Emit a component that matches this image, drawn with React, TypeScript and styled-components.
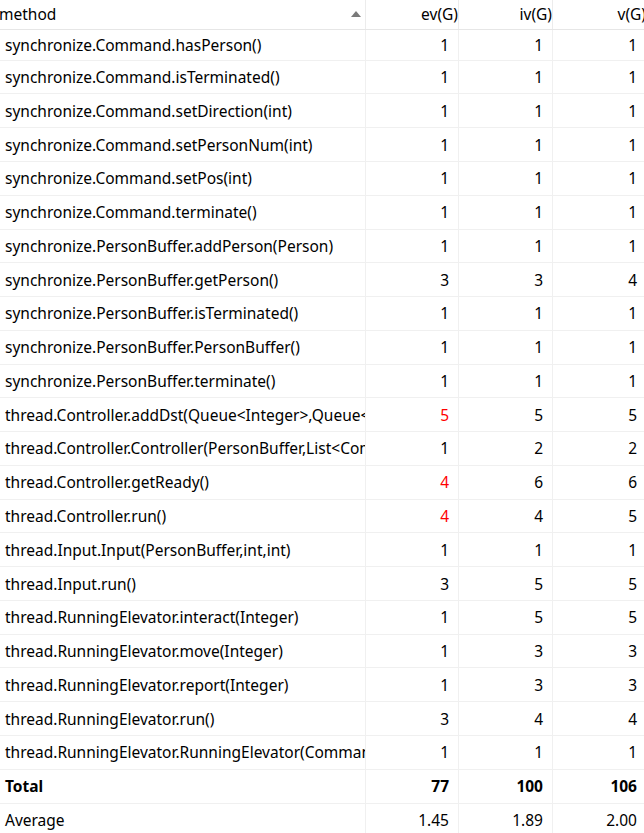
import styled, { createGlobalStyle } from 'styled-components'

interface MethodRow {
  name: string
  ev: number
  iv: number
  v: number
}

const rows: MethodRow[] = [
  { name: 'synchronize.Command.hasPerson()', ev: 1, iv: 1, v: 1 },
  { name: 'synchronize.Command.isTerminated()', ev: 1, iv: 1, v: 1 },
  { name: 'synchronize.Command.setDirection(int)', ev: 1, iv: 1, v: 1 },
  { name: 'synchronize.Command.setPersonNum(int)', ev: 1, iv: 1, v: 1 },
  { name: 'synchronize.Command.setPos(int)', ev: 1, iv: 1, v: 1 },
  { name: 'synchronize.Command.terminate()', ev: 1, iv: 1, v: 1 },
  { name: 'synchronize.PersonBuffer.addPerson(Person)', ev: 1, iv: 1, v: 1 },
  { name: 'synchronize.PersonBuffer.getPerson()', ev: 3, iv: 3, v: 4 },
  { name: 'synchronize.PersonBuffer.isTerminated()', ev: 1, iv: 1, v: 1 },
  { name: 'synchronize.PersonBuffer.PersonBuffer()', ev: 1, iv: 1, v: 1 },
  { name: 'synchronize.PersonBuffer.terminate()', ev: 1, iv: 1, v: 1 },
  { name: 'thread.Controller.addDst(Queue<Integer>,Queue<Integer>)', ev: 5, iv: 5, v: 5 },
  { name: 'thread.Controller.Controller(PersonBuffer,List<Command>)', ev: 1, iv: 2, v: 2 },
  { name: 'thread.Controller.getReady()', ev: 4, iv: 6, v: 6 },
  { name: 'thread.Controller.run()', ev: 4, iv: 4, v: 5 },
  { name: 'thread.Input.Input(PersonBuffer,int,int)', ev: 1, iv: 1, v: 1 },
  { name: 'thread.Input.run()', ev: 3, iv: 5, v: 5 },
  { name: 'thread.RunningElevator.interact(Integer)', ev: 1, iv: 5, v: 5 },
  { name: 'thread.RunningElevator.move(Integer)', ev: 1, iv: 3, v: 3 },
  { name: 'thread.RunningElevator.report(Integer)', ev: 1, iv: 3, v: 3 },
  { name: 'thread.RunningElevator.run()', ev: 3, iv: 4, v: 4 },
  { name: 'thread.RunningElevator.RunningElevator(Command)', ev: 1, iv: 1, v: 1 },
]

const GlobalStyle = createGlobalStyle`
  html, body {
    margin: 0;
    padding: 0;
    background: #ffffff;
    overflow: hidden;
  }
  body {
    font-family: 'Noto Sans', 'Open Sans', sans-serif;
    color: #000000;
  }
`

export default function App() {
  return (
    <>
      <GlobalStyle />
      <Viewport>
        <Table>
          <HeadRow>
            <HeadCell>
              method
              <SortIcon viewBox="0 0 10 6">
                <path d="M0 6 L5 0 L10 6 Z" fill="#7a7a7a" />
              </SortIcon>
            </HeadCell>
            <HeadCell $numeric>ev(G)</HeadCell>
            <HeadCell $numeric>iv(G)</HeadCell>
            <HeadCell $numeric>v(G)</HeadCell>
          </HeadRow>

          {rows.map((row) => (
            <Row key={row.name}>
              <NameCell>{row.name}</NameCell>
              <NumCell $alert={row.ev > 3}>{row.ev}</NumCell>
              <NumCell>{row.iv}</NumCell>
              <NumCell>{row.v}</NumCell>
            </Row>
          ))}

          <Row $bold>
            <NameCell>Total</NameCell>
            <NumCell>77</NumCell>
            <NumCell>100</NumCell>
            <NumCell>106</NumCell>
          </Row>
          <Row>
            <NameCell>Average</NameCell>
            <NumCell>1.45</NumCell>
            <NumCell>1.89</NumCell>
            <NumCell>2.00</NumCell>
          </Row>
        </Table>
      </Viewport>
    </>
  )
}

const Viewport = styled.div`
  width: 644px;
  height: 833px;
  overflow: hidden;
`

const Table = styled.div`
  width: 647px;
  display: flex;
  flex-direction: column;
`

const columns = '366px 93px 94px 94px'

const HeadRow = styled.div`
  display: grid;
  grid-template-columns: ${columns};
  height: 30px;
  box-sizing: border-box;
  border-bottom: 1px solid #e6e6e6;
  font-size: 15.5px;
`

const HeadCell = styled.div<{ $numeric?: boolean }>`
  display: flex;
  align-items: center;
  justify-content: ${({ $numeric }) => ($numeric ? 'flex-end' : 'space-between')};
  padding: 0 ${({ $numeric }) => ($numeric ? '0' : '4px')} 2px 0;
  margin-left: ${({ $numeric }) => ($numeric ? '0' : '-1px')};
  height: 27px;
  border-right: 1px solid #ececec;
  white-space: nowrap;
  overflow: hidden;
`

const SortIcon = styled.svg`
  width: 10px;
  height: 6px;
  margin-top: 1px;
`

const Row = styled.div<{ $bold?: boolean }>`
  display: grid;
  grid-template-columns: ${columns};
  height: 33.77px;
  box-sizing: border-box;
  border-bottom: 1px solid #f0f0f0;
  font-size: 15.5px;
  font-weight: ${({ $bold }) => ($bold ? 700 : 400)};

  &:nth-child(2) {
    height: 30.7px;
  }
`

const NameCell = styled.div`
  display: flex;
  align-items: center;
  padding-left: 5px;
  border-right: 1px solid #f0f0f0;
  white-space: nowrap;
  overflow: hidden;
`

const NumCell = styled.div<{ $alert?: boolean }>`
  display: flex;
  align-items: center;
  justify-content: flex-end;
  padding-right: 9px;
  border-right: 1px solid #f0f0f0;
  color: ${({ $alert }) => ($alert ? '#ff0000' : '#000000')};
  white-space: nowrap;
`
